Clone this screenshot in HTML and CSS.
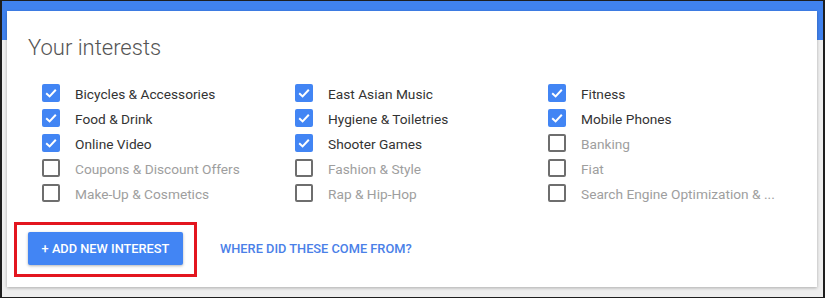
FILE: index.html
```html
<!DOCTYPE html>
<html>
<head>
<meta charset="utf-8">
<link rel="stylesheet" href="styles.css">
</head>
<body>
<div class="frame">
  <div class="card">
    <h1 class="title">Your interests</h1>
    <div class="grid">
      <div class="item on"><span class="box"><svg viewBox="0 0 18 18"><path d="M4.2 9.2 L7.6 12.4 L13.8 5.8"/></svg></span>Bicycles &amp; Accessories</div>
      <div class="item on"><span class="box"><svg viewBox="0 0 18 18"><path d="M4.2 9.2 L7.6 12.4 L13.8 5.8"/></svg></span>East Asian Music</div>
      <div class="item on"><span class="box"><svg viewBox="0 0 18 18"><path d="M4.2 9.2 L7.6 12.4 L13.8 5.8"/></svg></span>Fitness</div>
      <div class="item on"><span class="box"><svg viewBox="0 0 18 18"><path d="M4.2 9.2 L7.6 12.4 L13.8 5.8"/></svg></span>Food &amp; Drink</div>
      <div class="item on"><span class="box"><svg viewBox="0 0 18 18"><path d="M4.2 9.2 L7.6 12.4 L13.8 5.8"/></svg></span>Hygiene &amp; Toiletries</div>
      <div class="item on"><span class="box"><svg viewBox="0 0 18 18"><path d="M4.2 9.2 L7.6 12.4 L13.8 5.8"/></svg></span>Mobile Phones</div>
      <div class="item on"><span class="box"><svg viewBox="0 0 18 18"><path d="M4.2 9.2 L7.6 12.4 L13.8 5.8"/></svg></span>Online Video</div>
      <div class="item on"><span class="box"><svg viewBox="0 0 18 18"><path d="M4.2 9.2 L7.6 12.4 L13.8 5.8"/></svg></span>Shooter Games</div>
      <div class="item"><span class="box"></span>Banking</div>
      <div class="item"><span class="box"></span>Coupons &amp; Discount Offers</div>
      <div class="item"><span class="box"></span>Fashion &amp; Style</div>
      <div class="item"><span class="box"></span>Fiat</div>
      <div class="item"><span class="box"></span>Make-Up &amp; Cosmetics</div>
      <div class="item"><span class="box"></span>Rap &amp; Hip-Hop</div>
      <div class="item"><span class="box"></span>Search Engine Optimization &amp; ...</div>
    </div>
    <div class="actions">
      <div class="btn-wrap">
        <button class="btn">+ ADD NEW INTEREST</button>
        <span class="highlight"></span>
      </div>
      <a class="link">WHERE DID THESE COME FROM?</a>
    </div>
  </div>
</div>
</body>
</html>
```

FILE: styles.css
```css
html, body {
  margin: 0;
  padding: 0;
  background: #ffffff;
}
.frame {
  width: 825px;
  height: 298px;
  box-sizing: border-box;
  border: 1px solid #1e1e1e;
  border-right-width: 2px;
  border-left-width: 2px;
  background: linear-gradient(#4082ee 0, #4082ee 39px, #eeeeee 39px);
  padding: 10px 6px 10px 5px;
}
.card {
  background: #ffffff;
  height: 276px;
  box-sizing: border-box;
  padding: 24px 21px 0 21px;
  box-shadow: 0 1px 3px rgba(0, 0, 0, 0.28);
  font-family: Roboto, "Liberation Sans", Arial, sans-serif;
}
.title {
  margin: 0;
  font-size: 22px;
  line-height: 26px;
  font-weight: 300;
  color: #555555;
}
.grid {
  margin-top: 20px;
  padding-left: 14px;
  display: grid;
  grid-template-columns: 253px 253px 253px;
  grid-auto-rows: 25px;
}
.item {
  display: flex;
  align-items: center;
  font-size: 13.7px;
  color: #9e9e9e;
  white-space: nowrap;
}
.item.on {
  color: #333333;
}
.box {
  width: 18px;
  height: 18px;
  box-sizing: border-box;
  border: 2px solid #6e6e6e;
  border-radius: 2px;
  margin-right: 15px;
  margin-top: -2px;
  flex: none;
  display: flex;
}
.item.on .box {
  border: none;
  background: #4285f4;
}
.box svg {
  width: 18px;
  height: 18px;
}
.box path {
  fill: none;
  stroke: #ffffff;
  stroke-width: 2;
}
.actions {
  margin-top: 26px;
  display: flex;
  align-items: center;
}
.btn-wrap {
  position: relative;
}
.btn {
  display: block;
  height: 33px;
  width: 155px;
  padding: 0;
  border: none;
  border-radius: 2px;
  background: #4285f4;
  color: #ffffff;
  font-family: Roboto, "Liberation Sans", Arial, sans-serif;
  font-size: 12.8px;
  font-weight: 500;
  box-shadow: 0 1px 3px rgba(0, 0, 0, 0.3);
}
.highlight {
  position: absolute;
  left: -14px;
  top: -10px;
  width: 183px;
  height: 55px;
  box-sizing: border-box;
  border: 3px solid #e3161f;
}
.link {
  margin-left: 37px;
  font-size: 12.8px;
  font-weight: 500;
  color: #4a80e8;
}
```
